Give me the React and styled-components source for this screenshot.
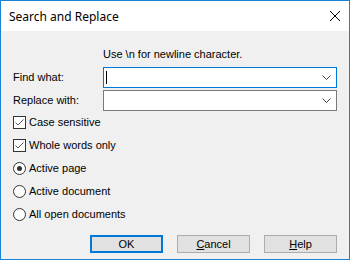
import React, { useState } from "react";
import styled, { createGlobalStyle } from "styled-components";

const GlobalStyle = createGlobalStyle`
html, body {
  margin: 0;
  padding: 0;
  background: #ffffff;
}
`;

const Window = styled.div`
box-sizing: border-box;
width: 350px;
height: 260px;
border: 1px solid #1883d7;
background: #f0f0f0;
display: flex;
flex-direction: column;
font-family: "Liberation Sans", Arial, sans-serif;
font-size: 11px;
color: #000;
`;

const TitleBar = styled.div`
height: 30px;
background: #ffffff;
display: flex;
align-items: center;
justify-content: space-between;
padding: 0 9px 0 8px;
`;

const Title = styled.div`
font-family: "Noto Sans", "Open Sans", sans-serif;
font-size: 12px;
color: #000;
`;

const CloseButton = styled.div`
width: 10px;
height: 10px;
display: flex;
`;

const Body = styled.div`
flex: 1;
display: flex;
flex-direction: column;
padding: 17px 12px 0 12px;
`;

const Note = styled.div`
line-height: 13px;
margin-left: 90px;
margin-bottom: 6px;
`;

const FieldGrid = styled.div`
display: grid;
grid-template-columns: 90px 1fr;
row-gap: 2px;
align-items: center;
margin-bottom: 5px;
`;

const Label = styled.label`
line-height: 13px;
`;

const Combo = styled.div`
box-sizing: border-box;
height: 21px;
background: #fff;
border: 1px solid ${p => (p.focused ? "#0078d7" : "#7a7a7a")};
display: flex;
align-items: center;
padding: 0 5px 0 2px;
`;

const Caret = styled.span`
width: 1px;
height: 13px;
background: #000;
flex: none;
`;

const ComboInput = styled.input`
flex: 1;
min-width: 0;
border: none;
outline: none;
background: transparent;
padding: 0;
font-family: inherit;
font-size: 11px;
caret-color: transparent;
`;

const Options = styled.div`
display: flex;
flex-direction: column;
gap: 10px;
`;

const OptionRow = styled.label`
display: flex;
align-items: center;
height: 13px;
gap: 3px;
line-height: 13px;
`;

const Box = styled.span`
box-sizing: border-box;
width: 13px;
height: 13px;
border: 1px solid #333;
background: #fff;
display: flex;
align-items: center;
justify-content: center;
`;

const Radio = styled.span`
box-sizing: border-box;
width: 13px;
height: 13px;
border: 1px solid #333;
border-radius: 50%;
background: #fff;
display: flex;
align-items: center;
justify-content: center;
&::after {
  content: "";
  width: 5px;
  height: 5px;
  border-radius: 50%;
  background: ${p => (p.checked ? "#333" : "transparent")};
}
`;

const ButtonRow = styled.div`
display: flex;
justify-content: flex-end;
gap: 14px;
margin-top: 14px;
`;

const Button = styled.button`
box-sizing: border-box;
width: 73px;
height: 18px;
padding: 0;
background: #e1e1e1;
border: ${p => (p.primary ? "2px solid #0078d7" : "1px solid #adadad")};
font-family: inherit;
font-size: 11px;
color: #000;
line-height: 14px;
u {
  text-decoration: underline;
}
`;

const Check = () => (
  <svg width="11" height="11" viewBox="0 0 11 11">
    <path d="M1.5 5.5 L4 8 L9.5 2.5" fill="none" stroke="#555" strokeWidth="1" />
  </svg>
);

const Chevron = () => (
  <svg width="9" height="5" viewBox="0 0 9 5">
    <path d="M0.5 0.5 L4.5 4.5 L8.5 0.5" fill="none" stroke="#444" strokeWidth="1" />
  </svg>
);

const App = () => {
  const [find, setFind] = useState("");
  const [replace, setReplace] = useState("");
  const [scope, setScope] = useState("page");

  const scopes = [
    { key: "page", label: "Active page" },
    { key: "doc", label: "Active document" },
    { key: "all", label: "All open documents" },
  ];

  return (
    <>
      <GlobalStyle />
      <Window>
        <TitleBar>
          <Title>Search and Replace</Title>
          <CloseButton>
            <svg width="10" height="10" viewBox="0 0 10 10">
              <path d="M0 0 L10 10 M10 0 L0 10" stroke="#000" strokeWidth="1" />
            </svg>
          </CloseButton>
        </TitleBar>
        <Body>
          <Note>Use \n for newline character.</Note>
          <FieldGrid>
            <Label htmlFor="findWhat">Find what:</Label>
            <Combo focused>
              {find === "" && <Caret />}
              <ComboInput id="findWhat" value={find} onChange={e => setFind(e.target.value)} />
              <Chevron />
            </Combo>
            <Label htmlFor="replaceWith">Replace with:</Label>
            <Combo>
              <ComboInput id="replaceWith" value={replace} onChange={e => setReplace(e.target.value)} />
              <Chevron />
            </Combo>
          </FieldGrid>
          <Options>
            <OptionRow>
              <Box><Check /></Box>
              Case sensitive
            </OptionRow>
            <OptionRow>
              <Box><Check /></Box>
              Whole words only
            </OptionRow>
            {scopes.map(s => (
              <OptionRow key={s.key} onClick={() => setScope(s.key)}>
                <Radio checked={scope === s.key} />
                {s.label}
              </OptionRow>
            ))}
          </Options>
          <ButtonRow>
            <Button primary>OK</Button>
            <Button><u>C</u>ancel</Button>
            <Button><u>H</u>elp</Button>
          </ButtonRow>
        </Body>
      </Window>
    </>
  );
};

export default App;
